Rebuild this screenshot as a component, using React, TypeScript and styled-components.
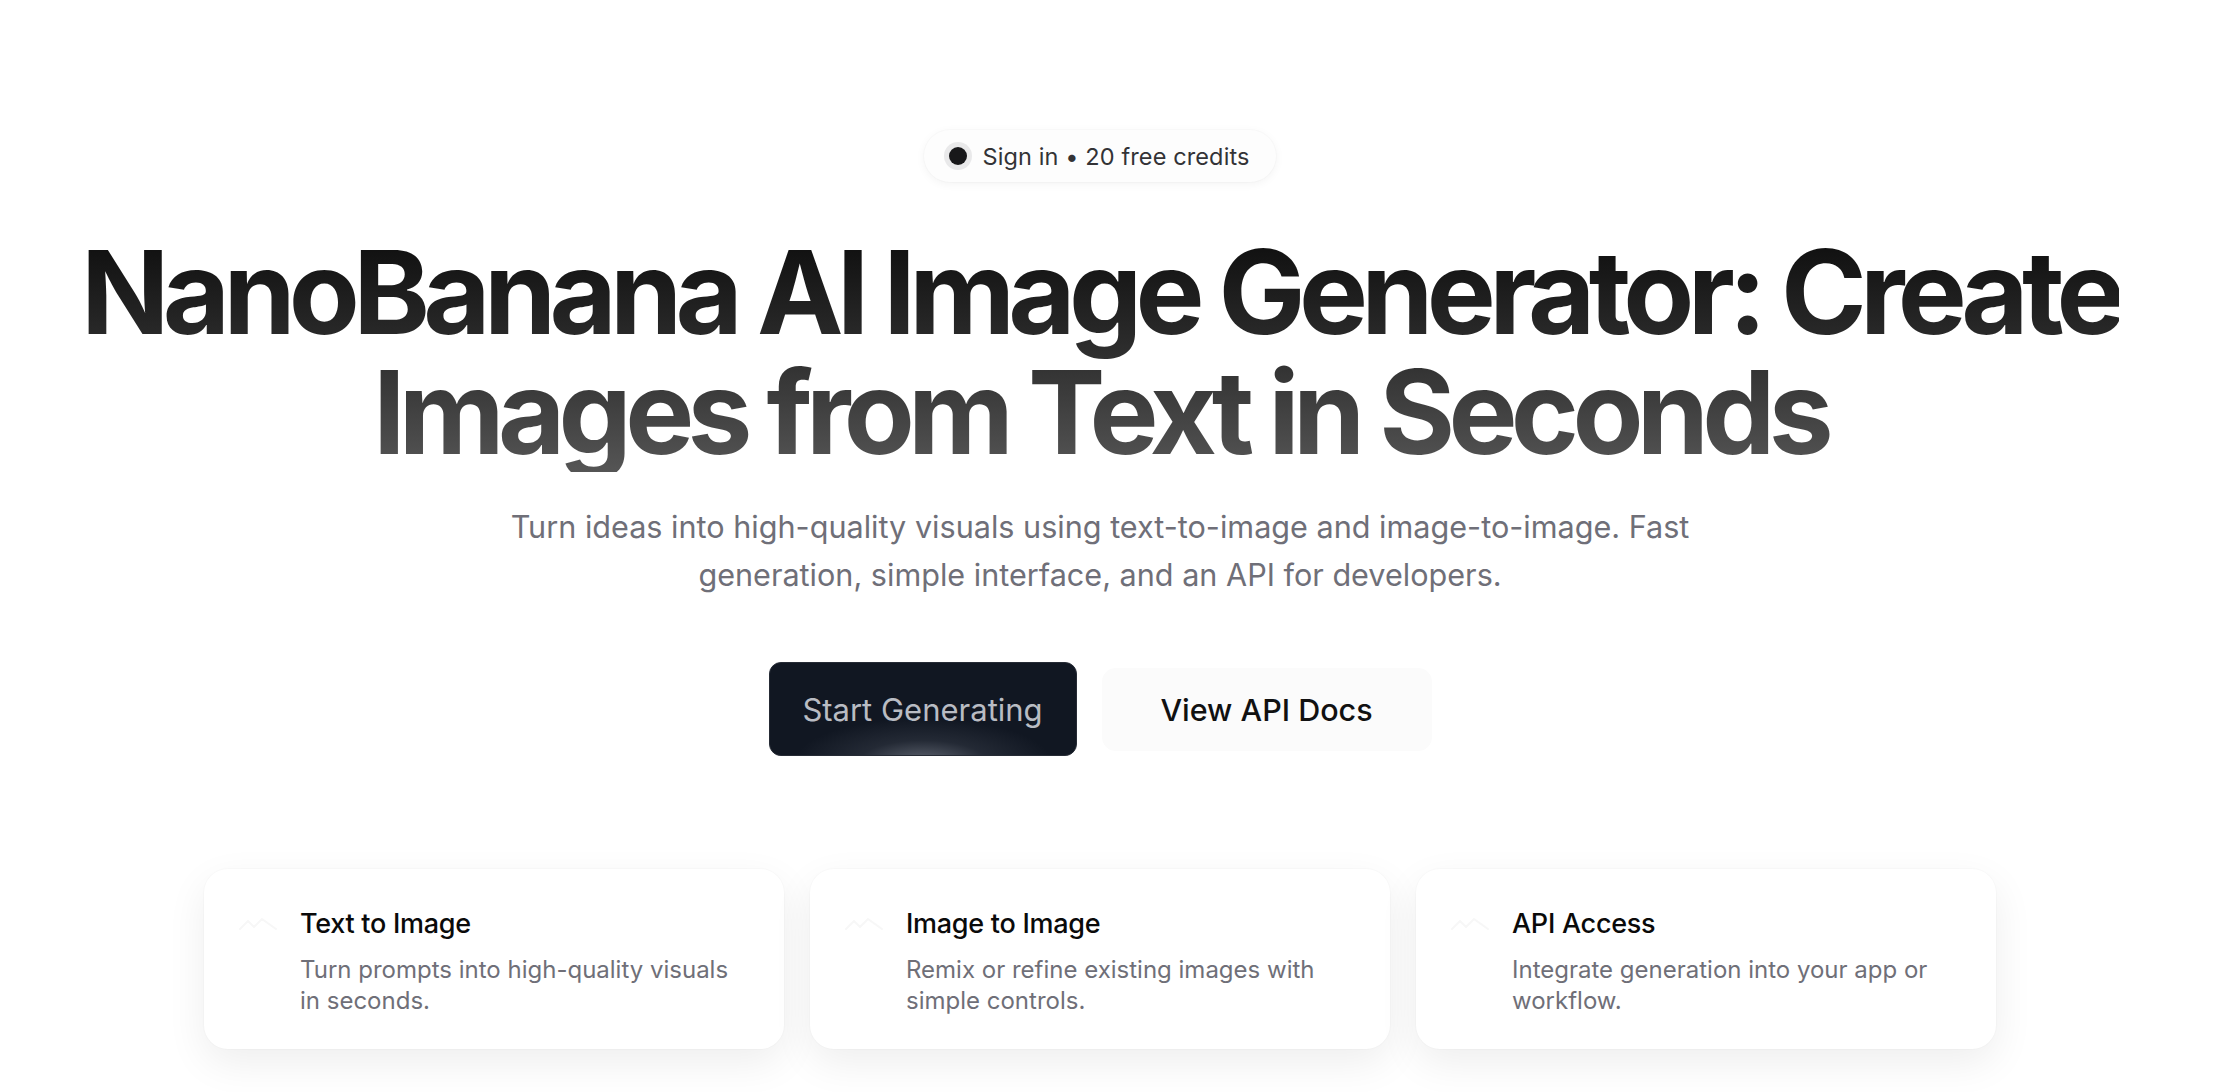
import styled, { createGlobalStyle } from "styled-components";

const GlobalStyle = createGlobalStyle`
  html, body {
    margin: 0;
    padding: 0;
    background: #ffffff;
  }
  body {
    font-family: Inter, "Noto Sans", "Liberation Sans", sans-serif;
    -webkit-font-smoothing: antialiased;
  }
`;

const Page = styled.main`
  display: flex;
  flex-direction: column;
  align-items: center;
  padding: 130px 20px 80px 0;
`;

const Badge = styled.div`
  display: flex;
  align-items: center;
  gap: 10px;
  height: 52px;
  padding: 0 26px 0 20px;
  box-sizing: border-box;
  border-radius: 999px;
  background: #fdfdfd;
  box-shadow: 0 2px 10px rgba(0, 0, 0, 0.05), 0 0 0 1px rgba(0, 0, 0, 0.015);
  font-size: 23.5px;
  letter-spacing: 0.005em;
  color: #333336;
`;

const Dot = styled.span`
  display: flex;
  align-items: center;
  justify-content: center;
  width: 28px;
  height: 28px;
  border-radius: 50%;
  background: #e9e9ea;

  &::after {
    content: "";
    width: 18px;
    height: 18px;
    border-radius: 50%;
    background: #18181a;
  }
`;

const Title = styled.h1`
  margin: 50px 0 0;
  font-size: 116px;
  line-height: 120px;
  font-weight: 700;
  letter-spacing: -0.058em;
  text-align: center;
  background: linear-gradient(180deg, #0d0d0d 0%, #2a2a2a 45%, #555555 100%);
  -webkit-background-clip: text;
  background-clip: text;
  color: transparent;
`;

const Lead = styled.p`
  margin: 31px 0 0;
  max-width: 1220px;
  font-size: 30.6px;
  line-height: 48px;
  color: #6f6f78;
  text-align: center;
`;

const Actions = styled.div`
  display: flex;
  align-items: center;
  gap: 25px;
  margin-top: 63px;
`;

const PrimaryButton = styled.button`
  width: 308px;
  height: 94px;
  border-radius: 12px;
  border: 1px solid #262b35;
  background: radial-gradient(
      ellipse 42% 48% at 50% 108%,
      rgba(120, 126, 138, 0.75) 0%,
      rgba(70, 76, 88, 0.35) 50%,
      rgba(17, 24, 39, 0) 100%
    ),
    #111722;
  color: #b9bcc3;
  font-family: inherit;
  font-size: 31px;
  font-weight: 400;
  cursor: pointer;
`;

const GhostButton = styled.button`
  width: 330px;
  height: 83px;
  border-radius: 14px;
  border: none;
  background: #fbfbfb;
  color: #111111;
  font-family: inherit;
  font-size: 30.5px;
  font-weight: 500;
  cursor: pointer;
`;

const Features = styled.section`
  display: grid;
  grid-template-columns: repeat(3, 580px);
  gap: 26px;
  margin-top: 113px;
`;

const Card = styled.article`
  display: flex;
  align-items: flex-start;
  gap: 22px;
  height: 180px;
  box-sizing: border-box;
  padding: 35px 30px 30px 34px;
  border-radius: 24px;
  background: #ffffff;
  box-shadow: 0 14px 40px rgba(0, 0, 0, 0.07), 0 0 0 1px rgba(0, 0, 0, 0.015);
`;

const IconSlot = styled.span`
  flex: none;
  width: 40px;
  height: 40px;
  display: flex;
  align-items: center;
  justify-content: center;
  color: #f7f7f7;
`;

const CardBody = styled.div`
  display: flex;
  flex-direction: column;
  gap: 10px;
`;

const CardTitle = styled.h3`
  margin: 0;
  font-size: 27px;
  line-height: 40px;
  font-weight: 500;
  color: #0a0a0a;
  letter-spacing: -0.01em;
`;

const CardText = styled.p`
  margin: 0;
  font-size: 24px;
  line-height: 31px;
  color: #6f6f78;
`;

const features = [
  {
    title: "Text to Image",
    text: "Turn prompts into high-quality visuals in seconds.",
  },
  {
    title: "Image to Image",
    text: "Remix or refine existing images with simple controls.",
  },
  {
    title: "API Access",
    text: "Integrate generation into your app or workflow.",
  },
];

const FaintIcon = () => (
  <svg width="40" height="14" viewBox="0 0 40 14" fill="none">
    <path
      d="M2 12 L10 4 L16 10 L24 2 L38 12"
      stroke="currentColor"
      strokeWidth="2"
      strokeLinecap="round"
      strokeLinejoin="round"
    />
  </svg>
);

const App = () => {
  return (
    <>
      <GlobalStyle />
      <Page>
        <Badge>
          <Dot />
          <span>Sign in • 20 free credits</span>
        </Badge>
        <Title>
          NanoBanana AI Image Generator: Create
          <br />
          Images from Text in Seconds
        </Title>
        <Lead>
          Turn ideas into high-quality visuals using text-to-image and
          image-to-image. Fast generation, simple interface, and an API for
          developers.
        </Lead>
        <Actions>
          <PrimaryButton>Start Generating</PrimaryButton>
          <GhostButton>View API Docs</GhostButton>
        </Actions>
        <Features>
          {features.map((f) => (
            <Card key={f.title}>
              <IconSlot>
                <FaintIcon />
              </IconSlot>
              <CardBody>
                <CardTitle>{f.title}</CardTitle>
                <CardText>{f.text}</CardText>
              </CardBody>
            </Card>
          ))}
        </Features>
      </Page>
    </>
  );
};

export default App;
